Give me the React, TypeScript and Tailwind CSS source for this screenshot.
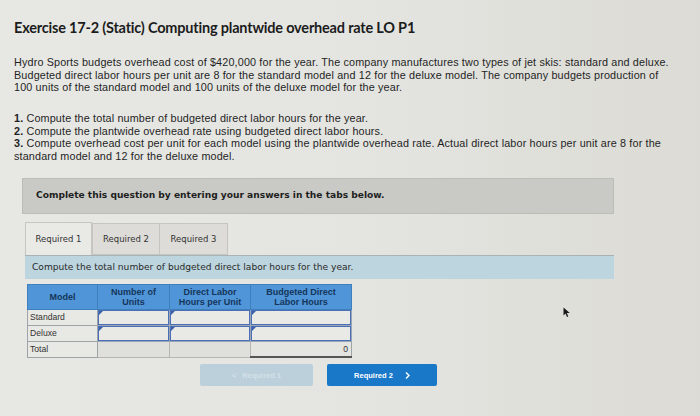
import React from "react";

const sans = { fontFamily: '"Lato", "Liberation Sans", sans-serif' };
const body = { fontFamily: '"Liberation Sans", Arial, sans-serif' };

function InputCell({ w }: { w: string }) {
  return (
    <td className={`${w} p-0 border border-[#9aa6b8]`}>
      <div className="relative h-[15px] border border-[#4a6fb5] bg-[#e9e9e5]">
        <div className="absolute left-0 top-0 w-0 h-0 border-t-[4px] border-r-[4px] border-t-[#3b5fa8] border-r-transparent" />
      </div>
    </td>
  );
}

export default function App() {
  return (
    <div className="w-[700px] h-[416px] overflow-hidden bg-linear-to-r from-[#e7e8e4] via-[#e4e5e1] to-[#dcdbd5] text-[#1c1c1c] relative">
      <div className="pl-[14px] pt-[20px]">
        <h1 className="text-[14.5px] font-bold leading-[16px] tracking-[-0.2px]" style={sans}>
          Exercise 17-2 (Static) Computing plantwide overhead rate LO P1
        </h1>
        <div className="mt-[20px] text-[10.8px] leading-[12.6px] whitespace-nowrap text-[#1f1f1f] tracking-[0.15px]" style={body}>
          <div>Hydro Sports budgets overhead cost of $420,000 for the year. The company manufactures two types of jet skis: standard and deluxe.</div>
          <div>Budgeted direct labor hours per unit are 8 for the standard model and 12 for the deluxe model. The company budgets production of</div>
          <div>100 units of the standard model and 100 units of the deluxe model for the year.</div>
        </div>
        <div className="mt-[18px] text-[10.8px] leading-[12.8px] whitespace-nowrap text-[#1f1f1f] tracking-[0.15px]" style={body}>
          <div><b>1.</b> Compute the total number of budgeted direct labor hours for the year.</div>
          <div><b>2.</b> Compute the plantwide overhead rate using budgeted direct labor hours.</div>
          <div><b>3.</b> Compute overhead cost per unit for each model using the plantwide overhead rate. Actual direct labor hours per unit are 8 for the</div>
          <div>standard model and 12 for the deluxe model.</div>
        </div>
      </div>

      <div className="ml-[22px] mt-[15px] w-[592px]">
        <div
          className="h-[36px] bg-[#c9cac5] border border-[#bdbdb8] flex items-center pl-[13px] text-[9.1px] font-bold text-[#1e1e1e]"
          style={{ fontFamily: '"DejaVu Sans", Verdana, sans-serif' }}
        >
          Complete this question by entering your answers in the tabs below.
        </div>

        <div className="ml-[3px] mt-[8px] w-[589px]" style={{ fontFamily: '"DejaVu Sans", Verdana, sans-serif' }}>
          <div className="flex items-end h-[33px]">
            <div className="w-[67px] h-[33px] bg-[#e9e9e6] border border-[#c5c5c1] border-b-0 flex items-center justify-center text-[8.5px] text-[#333]">
              Required 1
            </div>
            <div className="w-[68px] h-[32px] bg-[#dddcd8] border border-[#c5c5c1] flex items-center justify-center text-[8.5px] text-[#333]">
              Required 2
            </div>
            <div className="w-[68px] h-[32px] bg-[#dddcd8] border border-[#c5c5c1] border-l-0 flex items-center justify-center text-[8.5px] text-[#333]">
              Required 3
            </div>
          </div>
          <div className="h-[24px] bg-[#bdd5de] border-t border-[#a9b2b4] flex items-center pl-[7px] text-[9.1px] text-[#2a2a2a]">
            Compute the total number of budgeted direct labor hours for the year.
          </div>
        </div>

        <table
          className="ml-[5px] mt-[5px] border-collapse text-[8.6px]"
          style={{ fontFamily: '"Liberation Sans", Arial, sans-serif' }}
        >
          <thead>
            <tr className="bg-[#4f95d8] text-[#15365a] leading-[10px]">
              <th className="w-[70px] h-[25px] border border-[#3f7fbd] font-bold text-[9px]">Model</th>
              <th className="w-[72px] border border-[#3f7fbd] font-bold text-[9px]">Number of<br />Units</th>
              <th className="w-[81px] border border-[#3f7fbd] font-bold text-[9px]">Direct Labor<br />Hours per Unit</th>
              <th className="w-[101px] border border-[#3f7fbd] font-bold text-[9px]">Budgeted Direct<br />Labor Hours</th>
            </tr>
          </thead>
          <tbody className="text-[#333]">
            <tr className="h-[16px]">
              <td className="border border-[#9ea3a8] bg-[#e8e8e4] pl-[2px]">Standard</td>
              <InputCell w="w-[72px]" />
              <InputCell w="w-[81px]" />
              <InputCell w="w-[101px]" />
            </tr>
            <tr className="h-[16px]">
              <td className="border border-[#9ea3a8] bg-[#e8e8e4] pl-[2px]">Deluxe</td>
              <InputCell w="w-[72px]" />
              <InputCell w="w-[81px]" />
              <InputCell w="w-[101px]" />
            </tr>
            <tr className="h-[16px]">
              <td className="border border-[#9ea3a8] bg-[#e8e8e4] pl-[2px]">Total</td>
              <td className="border border-[#b5b5b1] bg-[#dfdfdb]" />
              <td className="border border-[#b5b5b1] bg-[#dfdfdb]" />
              <td className="border border-[#9ea3a8] border-b-2 border-b-[#555] bg-[#e4e4e0] text-right pr-[3px]">0</td>
            </tr>
          </tbody>
        </table>

        <div className="flex mt-[6px] ml-[178px] gap-[14px]" style={{ fontFamily: '"Liberation Sans", Arial, sans-serif' }}>
          <div className="w-[113px] h-[22px] bg-[#bcd0dc] rounded-[2px] flex items-center justify-center gap-[6px] text-[7.5px] font-bold text-[#d3e0e8]">
            <span>&lt;</span>
            <span>Required 1</span>
          </div>
          <div className="w-[110px] h-[22px] bg-[#1a78c9] rounded-[2px] flex items-center justify-center gap-[12px] text-[7.5px] font-bold text-white">
            <span>Required 2</span>
            <svg width="5" height="7" viewBox="0 0 5 7"><path d="M1 0.5 L4 3.5 L1 6.5" stroke="white" strokeWidth="1.4" fill="none" /></svg>
          </div>
        </div>
      </div>

      <svg className="absolute left-[563px] top-[307px]" width="8" height="11" viewBox="0 0 8 11">
        <path d="M0.5 0.5 L0.5 8.5 L2.5 6.5 L4 10 L5.3 9.4 L3.8 6 L6.8 6 Z" fill="#1a1a1a" />
      </svg>
    </div>
  );
}
